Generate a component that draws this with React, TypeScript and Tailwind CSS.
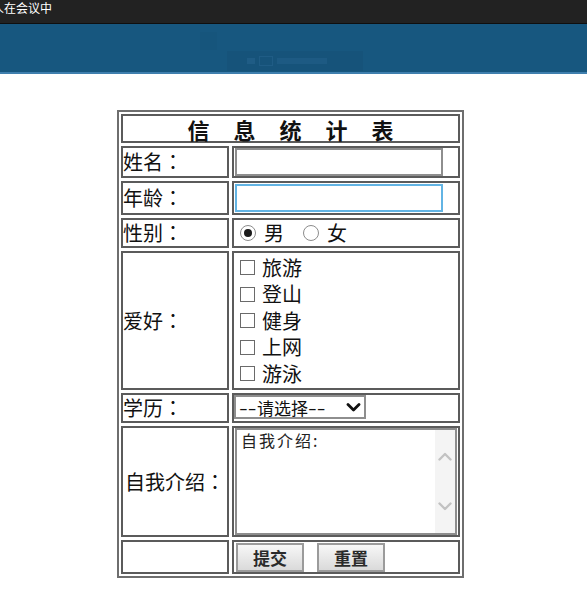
import React from 'react';

const cell = 'border-2 border-[#5b5b5b] bg-white';
const hobbies = ['旅游', '登山', '健身', '上网', '游泳'];
const titleChars = ['信', '息', '统', '计', '表'];

type RowProps = {
  h: string;
  label: string;
  labelClass?: string;
  bodyClass?: string;
  children?: React.ReactNode;
};

function Row({ h, label, labelClass = '', bodyClass = 'items-center', children }: RowProps) {
  return (
    <div className={`flex gap-[3px] ${h}`}>
      <div className={`flex w-[108px] items-center text-[20px] leading-none text-[#111] ${cell} ${labelClass}`}>
        {label && (
          <>
            <span>{label}</span>
            <span className="font-['Noto_Sans_CJK_JP',sans-serif]">：</span>
          </>
        )}
      </div>
      <div className={`flex flex-1 ${cell} ${bodyClass}`}>{children}</div>
    </div>
  );
}

function Radio({ checked }: { checked?: boolean }) {
  return (
    <span className="flex h-[16px] w-[16px] items-center justify-center rounded-full border border-[#8c8c8c] bg-white">
      {checked && <span className="h-[8px] w-[8px] rounded-full bg-[#1a1a1a]" />}
    </span>
  );
}

function Chevron({ up, color, width, className }: { up?: boolean; color: string; width: string; className: string }) {
  return (
    <svg viewBox="0 0 14 9" className={className} fill="none">
      <polyline
        points={up ? '1.5,7.5 7,2 12.5,7.5' : '1.5,1.5 7,7 12.5,1.5'}
        stroke={color}
        strokeWidth={width}
        strokeLinecap="round"
        strokeLinejoin="round"
      />
    </svg>
  );
}

function Dashes() {
  return (
    <span className="inline-block w-[18px] overflow-visible">
      <span className="inline-block origin-left scale-x-[1.55] font-['Liberation_Sans',sans-serif]">--</span>
    </span>
  );
}

export default function App() {
  return (
    <div className="min-h-[600px] w-[587px] bg-white font-['Noto_Sans_CJK_SC',sans-serif]">
      {/* meeting bar */}
      <div className="flex h-[23px] items-start overflow-hidden bg-[#222222] pt-[1px]">
        <span className="ml-[-8px] text-[12px] leading-[13px] text-white">人在会议中</span>
      </div>
      <div className="h-[1px] bg-[#0f0f0f]" />
      <div className="flex h-[48px] flex-col bg-[#17577f] pl-[200px] pt-[8px]">
        <div className="h-[18px] w-[17px] bg-[#16557c]" />
        <div className="ml-[27px] mt-[1px] flex h-[20px] w-[136px] items-center gap-[4px] bg-[#16537a] px-[20px]">
          <span className="h-[6px] w-[8px] bg-[#1f5c85]" />
          <span className="h-[10px] w-[14px] border border-[#1f5c85]" />
          <span className="h-[6px] w-[50px] bg-[#1d5a83]" />
        </div>
      </div>
      <div className="h-[2px] bg-[#3f7fae]" />

      {/* form table */}
      <div className="ml-[117px] mt-[36px] flex w-[347px] flex-col gap-[3px] border-2 border-[#6e6e6e] p-[2px]">
        <div className={`flex h-[29px] items-center justify-center gap-[24px] ${cell}`}>
          {titleChars.map((c) => (
            <span key={c} className="text-[22px] font-bold leading-none text-[#111]">
              {c}
            </span>
          ))}
        </div>

        <Row h="h-[32px]" label="姓名">
          <input readOnly className="ml-[1px] h-[28px] w-[208px] border-2 border-[#8e8e8e] bg-white outline-none" />
        </Row>

        <Row h="h-[34px]" label="年龄">
          <input readOnly className="ml-[1px] h-[28px] w-[208px] border-2 border-[#62b4e4] bg-white outline-none" />
        </Row>

        <Row h="h-[30px]" label="性别" bodyClass="items-center pl-[6px]">
          <Radio checked />
          <span className="ml-[8px] text-[20px] leading-none text-[#111]">男</span>
          <span className="ml-[19px]">
            <Radio />
          </span>
          <span className="ml-[8px] text-[20px] leading-none text-[#111]">女</span>
        </Row>

        <Row h="h-[139px]" label="爱好" bodyClass="flex-col justify-center pl-[6px]">
          {hobbies.map((hobby) => (
            <div key={hobby} className="flex h-[26.5px] items-center gap-[7px]">
              <span className="h-[15px] w-[15px] border border-[#6a6a6a] bg-white" />
              <span className="text-[20px] leading-none text-[#111]">{hobby}</span>
            </div>
          ))}
        </Row>

        <Row h="h-[30px]" label="学历" bodyClass="items-start">
          <div className="flex h-[24px] w-[132px] items-center justify-between border-2 border-[#8e8e8e] bg-white pl-[3px] pr-[2px] text-[17px] leading-none text-[#111]">
            <span className="flex items-center">
              <Dashes />
              <span>请选择</span>
              <Dashes />
            </span>
            <Chevron color="#111" width="2.8" className="h-[9px] w-[17px]" />
          </div>
        </Row>

        <Row h="h-[111px]" label="自我介绍" labelClass="justify-center" bodyClass="items-start pl-[1px]">
          <div className="flex h-[107px] w-[222px] border-2 border-[#8d8d8d] bg-white">
            <div className="flex-1 pl-[4px] text-[16px] leading-[20px] tracking-[2px] text-[#222]">自我介绍:</div>
            <div className="flex w-[20px] flex-col items-center justify-between bg-[#f4f4f4] py-[22px]">
              <Chevron up color="#c2c2c2" width="2.4" className="h-[9px] w-[14px]" />
              <Chevron color="#c2c2c2" width="2.4" className="h-[9px] w-[14px]" />
            </div>
          </div>
        </Row>

        <Row h="h-[34px]" label="" bodyClass="items-center gap-[13px] pl-[2px]">
          <button className="h-[29px] w-[68px] border-2 border-[#9b9b9b] bg-linear-to-b from-[#f7f7f7] to-[#dadada] text-[17px] font-bold leading-none text-[#2a2a2a]">
            提交
          </button>
          <button className="h-[29px] w-[68px] border-2 border-[#9b9b9b] bg-linear-to-b from-[#f7f7f7] to-[#dadada] text-[17px] font-bold leading-none text-[#2a2a2a]">
            重置
          </button>
        </Row>
      </div>
    </div>
  );
}
